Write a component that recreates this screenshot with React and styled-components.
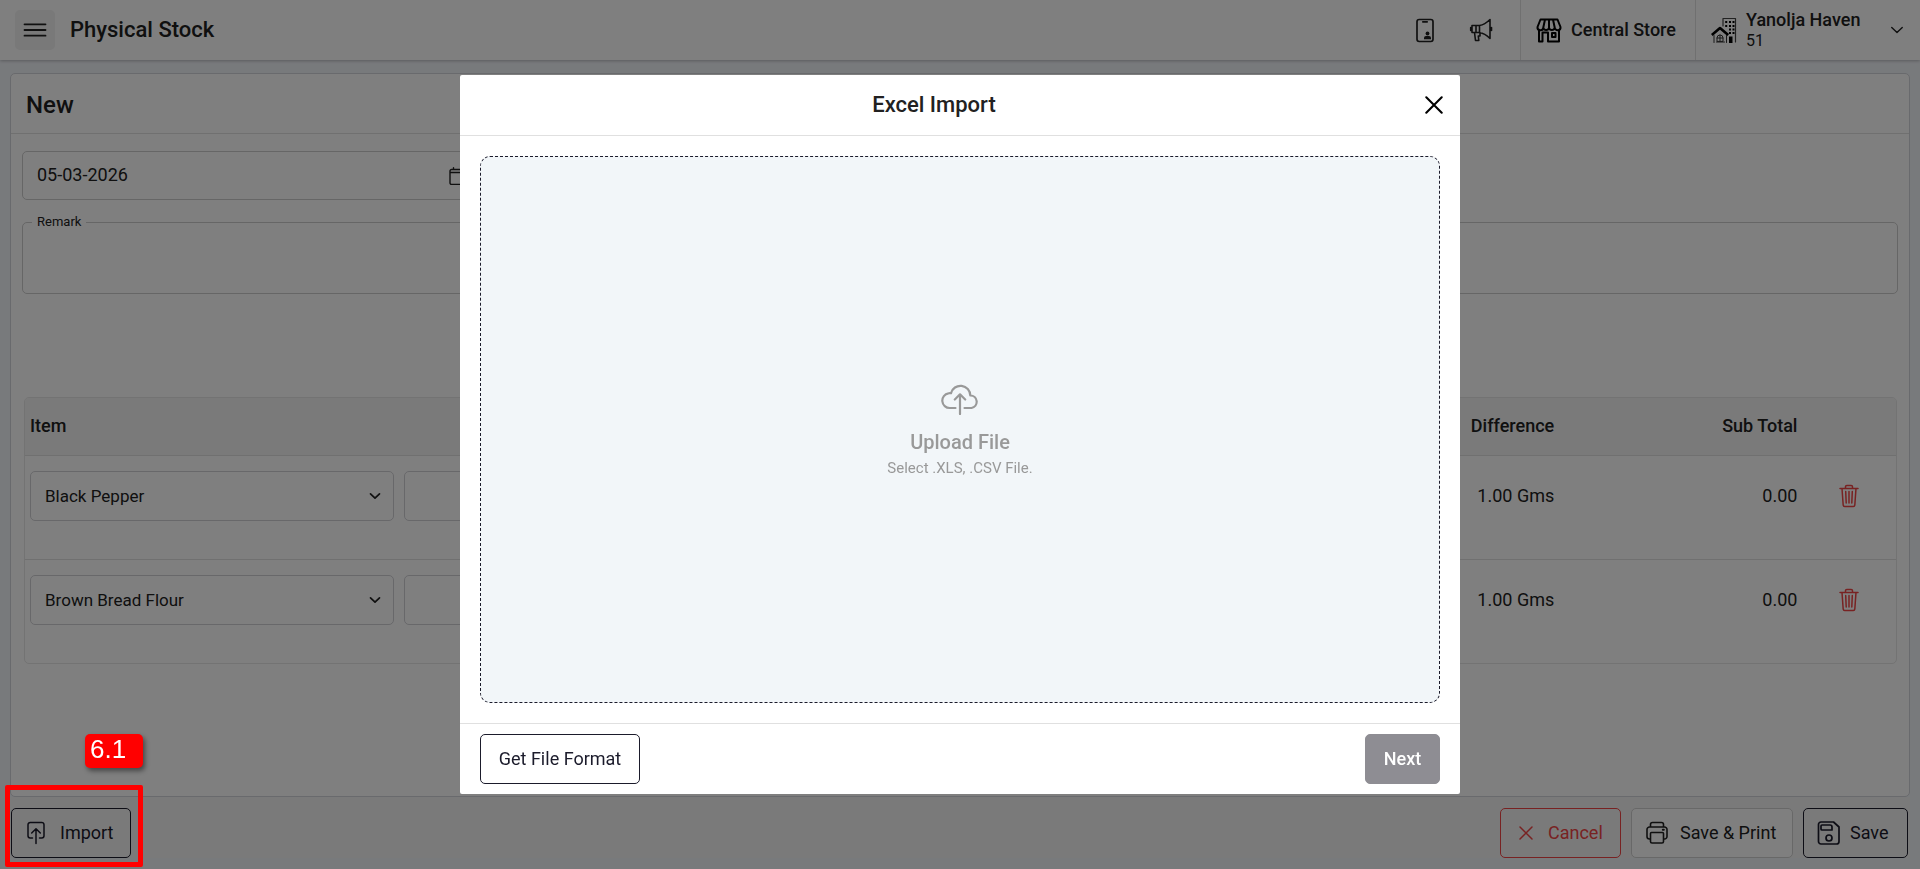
import React from "react";
import styled, { createGlobalStyle, css } from "styled-components";

const GlobalStyle = createGlobalStyle`
  *, *::before, *::after { box-sizing: border-box; }
  body { margin: 0; background: #f1f4f9; color: #212121; font: 400 18px/24px Roboto, sans-serif; }
  button, input, select, textarea { font: inherit; color: inherit; }
  h1, h2, p { margin: 0; }
`;

const Page = styled.div`
  display: flex;
  flex-direction: column;
  min-height: 100vh;
`;

const TopBar = styled.header`
  display: flex;
  align-items: center;
  height: 60px;
  padding-left: 15px;
  background: #fff;
  box-shadow: 0 1px 3px rgba(0, 0, 0, 0.25);
`;

const MenuButton = styled.button`
  display: grid;
  place-items: center;
  width: 40px;
  height: 40px;
  padding: 0;
  border: 0;
  border-radius: 5px;
  background: #f2f2f2;
`;

const PageTitle = styled.h1`
  flex: 1;
  margin-left: 15px;
  font-size: 22px;
  font-weight: 500;
`;

const BarIcon = styled.button`
  display: grid;
  place-items: center;
  width: 56px;
  height: 60px;
  padding: 0;
  border: 0;
  background: none;
`;

const BarIcons = styled.div`
  display: flex;
  padding-right: 11px;
`;

const BarSection = styled.button`
  display: flex;
  align-items: center;
  gap: 9px;
  width: ${(p) => p.$width};
  height: 60px;
  padding: 0 16px 0 15px;
  border: 0;
  border-left: 1px solid #e0e0e0;
  background: none;
  text-align: left;
  font-weight: 500;
`;

const Property = styled.span`
  display: flex;
  flex: 1;
  flex-direction: column;
  line-height: 22px;
`;

const PropertyCode = styled.span`
  font-size: 16px;
  font-weight: 400;
  line-height: 20px;
`;

const Card = styled.main`
  flex: 1;
  margin: 13px 10px 0;
  border: 1px solid #d2d4da;
  border-radius: 5px;
  background: #fff;
`;

const CardTitle = styled.h2`
  padding: 17px 15px 13px;
  border-bottom: 1px solid #e0e0e0;
  font-size: 24px;
  font-weight: 500;
  line-height: 29px;
`;

const Form = styled.form`
  padding: 17px 11px 0;
`;

const DateField = styled.label`
  display: flex;
  align-items: center;
  width: 460px;
  height: 49px;
  padding: 0 14px;
  border: 1px solid #ccc;
  border-radius: 5px;
`;

const DateInput = styled.input`
  flex: 1;
  min-width: 0;
  padding: 0 0 2px;
  border: 0;
  background: none;
`;

const Remark = styled.fieldset`
  height: 78px;
  margin: 16px 0 0;
  padding: 0 14px;
  border: 1px solid #ccc;
  border-radius: 5px;
`;

const RemarkLegend = styled.legend`
  margin-left: -5px;
  padding: 0 5px;
  font-size: 13px;
  line-height: 12px;
`;

const RemarkInput = styled.textarea`
  display: block;
  width: 100%;
  height: 52px;
  padding: 0;
  border: 0;
  background: none;
  resize: none;
`;

const TableFrame = styled.div`
  margin: 103px 1px 0 2px;
  overflow: hidden;
  border: 1px solid #e6e6e6;
  border-radius: 5px;
`;

const Table = styled.table`
  width: 100%;
  border-collapse: collapse;
  table-layout: fixed;
`;

const Th = styled.th`
  width: ${(p) => p.$width};
  height: 57px;
  padding: 0 5px;
  border-bottom: 1px solid #e0e0e0;
  background: #f4f4f4;
  font-weight: 500;
  text-align: ${(p) => p.$align || "left"};
`;

const Td = styled.td`
  height: 104px;
  padding: 15px 5px 0;
  text-align: ${(p) => p.$align || "left"};
  vertical-align: top;
  tr + tr > & { border-top: 1px solid #e0e0e0; }
`;

const CellLine = styled.div`
  display: flex;
  align-items: center;
  justify-content: ${(p) => p.$justify || "flex-end"};
  height: 50px;
`;

const SelectBox = styled.div`
  display: flex;
  align-items: center;
  height: 50px;
  padding-right: 12px;
  border: 1px solid #d0d0d5;
  border-radius: 5px;
`;

const Select = styled.select`
  flex: 1;
  height: 48px;
  padding: 0 0 0 14px;
  border: 0;
  background: none;
  font-size: 17px;
  appearance: none;
`;

const CellInput = styled.input`
  width: 100%;
  height: 50px;
  padding: 0 14px;
  border: 1px solid #d0d0d5;
  border-radius: 5px;
`;

const IconButton = styled.button`
  display: grid;
  place-items: center;
  padding: 0;
  border: 0;
  background: none;
  color: ${(p) => (p.$danger ? "#f04444" : "inherit")};
`;

const Actions = styled.footer`
  display: flex;
  align-items: center;
  gap: 10px;
  margin: 0 10px 11px;
  padding: 11px 2px 0 1px;
  background: #f5f5f5;
`;

const tones = {
  dark: css`border-color: #1b1b2b; color: #1b1b2b;`,
  danger: css`border-color: #f04444; color: #f04444;`,
  light: css`border-color: #d0d0d0; background: #fff;`,
  disabled: css`border-color: #8e8d93; background: #8e8d93; color: #fff; font-weight: 500;`,
};

const Button = styled.button`
  display: flex;
  align-items: center;
  justify-content: ${(p) => (p.$gap ? "flex-start" : "center")};
  gap: ${(p) => p.$gap};
  width: ${(p) => p.$width};
  height: 50px;
  padding: 0 0 0 ${(p) => p.$pad || "0"};
  border: 1px solid;
  border-radius: 5px;
  background: none;
  white-space: nowrap;
  ${(p) => tones[p.$tone]}
`;

const Marked = styled.div`
  position: relative;
  margin-right: auto;
`;

const MarkFrame = styled.div`
  position: absolute;
  inset: -23px -12px -9px -6px;
  z-index: 30;
  border: 5px solid #f00;
  border-radius: 2px;
  pointer-events: none;
`;

const MarkBadge = styled.span`
  position: absolute;
  right: -12px;
  bottom: 90px;
  z-index: 30;
  width: 58px;
  height: 34px;
  padding-left: 5px;
  border-radius: 5px;
  background: #f00;
  box-shadow: 2px 3px 5px rgba(0, 0, 0, 0.45);
  color: #fff;
  font: 26px/30px "Liberation Sans", sans-serif;
`;

const Overlay = styled.div`
  position: fixed;
  inset: 0;
  z-index: 20;
  display: flex;
  justify-content: center;
  padding: 75px 20px;
  background: rgba(0, 0, 0, 0.5);
`;

const Modal = styled.section`
  display: flex;
  flex-direction: column;
  width: 100%;
  max-width: 1000px;
  border-radius: 2px;
  background: #fff;
`;

const ModalHeader = styled.header`
  display: flex;
  align-items: center;
  height: 61px;
  border-bottom: 1px solid #e0e0e0;
`;

const ModalTitle = styled.h2`
  flex: 1;
  font-size: 22px;
  font-weight: 500;
  text-align: center;
`;

const CloseButton = styled(IconButton)`
  width: 52px;
  height: 52px;
  color: #000;
`;

const DropZone = styled.button`
  display: flex;
  flex: 1;
  flex-direction: column;
  align-items: center;
  justify-content: center;
  margin: 20px;
  padding: 4px 0 0;
  border: 1px dashed #1b1b2b;
  border-radius: 10px;
  background: #f2f6f9;
  color: #999;
`;

const DropTitle = styled.span`
  margin-top: 13px;
  font-size: 20px;
  font-weight: 500;
  line-height: 28px;
`;

const DropHint = styled.span`
  font-size: 15px;
`;

const ModalFooter = styled.footer`
  display: flex;
  justify-content: space-between;
  padding: 10px 20px;
  border-top: 1px solid #e0e0e0;
`;

const Svg = ({ w = 24, h = w, box = `0 0 ${w} ${h}`, sw = 1.5, children }) => (
  <svg width={w} height={h} viewBox={box} fill="none" stroke="currentColor" strokeWidth={sw} strokeLinecap="round" strokeLinejoin="round" aria-hidden="true">
    {children}
  </svg>
);

const MenuIcon = () => <Svg sw={1.8}><path d="M1.5 6.3h21M1.5 12h21M1.5 17.7h21" /></Svg>;

const PhoneIcon = () => (
  <Svg h={26} sw={1.7}>
    <rect x="4" y="2.5" width="16" height="22" rx="2.2" />
    <path d="M9.8 4.8h4.400" />
    <g fill="currentColor" stroke="none">
      <circle cx="14.5" cy="16.5" r="1.9" />
      <path d="M11 22.300v-1.300a2 2 0 0 1 2-2h3a2 2 0 0 1 2 2v1.300z" />
    </g>
  </Svg>
);

const MegaphoneIcon = () => (
  <Svg h={26} sw={1.6}>
    <path d="M3 8.500h7.500v7H3zM10.500 8.500C14 8 17.500 6 21 2.500v19c-3.500-3.500-7-5.500-10.500-6zM1.700 10.500v3M22.500 10.500v3M5.500 15.500l1 8h3.300l-.5-4.500H11v-3.500M7 8.500v7" />
  </Svg>
);

const StoreIcon = () => (
  <Svg w={26} h={26} sw={2}>
    <g color="#000" stroke="currentColor">
      <path d="M4.500 2.500h17l3 7.500a2.900 2.900 0 0 1-5.800.6 2.900 2.900 0 0 1-5.700 0 2.900 2.900 0 0 1-5.700 0A2.900 2.900 0 0 1 1.500 10zM9 2.500 7.300 10.500M17 2.500l1.700 8M13 2.500v8M3 13v11.500h3.500v-9h5.500v9h11V13M12 24.500h11M16 16h3.500v4H16z" />
    </g>
  </Svg>
);

const BuildingIcon = () => (
  <Svg w={26} h={26} sw={1.3}>
    <g color="#000">
      <path d="M12 9V1.500h12.500V25" strokeWidth="1.200" stroke="#444" />
      <g stroke="currentColor" strokeLinecap="butt">
        <path d="M14.200 5h2M18 5h2M21.500 5h2M14.200 9h2M18 9h2M21.500 9h2M18 12.500h2M21.500 12.500h2M18 16h2M21.500 16h2" strokeWidth="2.200" />
        <path d="M.8 18 9 11l8.200 7" strokeWidth="2.600" />
      </g>
      <path d="M3 18.500V25.500M15.500 18.500v7M5.500 25h8M6 24v-3a3 3 0 0 1 6 0v3zM9 18v6M6 21h6" strokeWidth="1" stroke="#333" />
      <path d="M18 19.500h3.500V26H18z" fill="currentColor" stroke="none" />
    </g>
  </Svg>
);

const ChevronIcon = ({ w = 12, sw = 1.7 }) => <Svg w={w} box="0 0 12 12" sw={sw}><path d="m1.500 3.800 4.500 4.400 4.500-4.400" /></Svg>;

const CalendarIcon = () => <Svg w={18} sw={1.4}><path d="M2.500 2.500h13a1.500 1.500 0 0 1 1.500 1.500v12a1.500 1.500 0 0 1-1.500 1.500h-13A1.500 1.500 0 0 1 1 16V4a1.500 1.500 0 0 1 1.500-1.500zM1 5.500h16M4.500.8v1.700M13.500.8v1.700" /></Svg>;

const TrashIcon = () => <Svg w={20} h={24} sw={1.5}><path d="M1 4.500h18M3 4.500l1.200 16.700a1.500 1.500 0 0 0 1.500 1.300h8.600a1.500 1.500 0 0 0 1.500-1.300L17 4.500M6.500 4.500V2.800A1.300 1.300 0 0 1 7.800 1.500h4.400a1.300 1.300 0 0 1 1.300 1.300v1.700M6.700 7.500l.5 11.500M10 7.500V19M13.300 7.500 12.800 19" /></Svg>;

const ImportIcon = () => <Svg w={18} h={24}><path d="M5.500 17H3.200A2.200 2.200 0 0 1 1 14.800V3.700a2.200 2.200 0 0 1 2.200-2.200h11.600A2.200 2.200 0 0 1 17 3.700v11.100a2.200 2.200 0 0 1-2.200 2.200h-2.300M9 22.500V8M4.700 12 9 7.700l4.300 4.300" /></Svg>;

const CrossIcon = ({ w = 14, sw = 1.5 }) => <Svg w={w} box="0 0 14 14" sw={sw}><path d="m1 1 12 12M13 1 1 13" /></Svg>;

const PrinterIcon = () => (
  <Svg w={22} h={24} sw={1.6}>
    <path d="M4.500 6V3.500A2 2 0 0 1 6.500 1.500h9a2 2 0 0 1 2 2V6M4.500 18H3.500A2.500 2.500 0 0 1 1 15.500V8.500A2.500 2.500 0 0 1 3.500 6h15A2.500 2.500 0 0 1 21 8.500v7A2.500 2.500 0 0 1 18.500 18h-1M5.500 11.500h11a1 1 0 0 1 1 1v8a1.500 1.500 0 0 1-1.500 1.500H6A1.500 1.500 0 0 1 4.500 20.500v-8a1 1 0 0 1 1-1z" />
    <path d="M16.800 8.700h1" strokeWidth="2" />
  </Svg>
);

const SaveIcon = () => <Svg w={23} h={24} sw={1.7}><path d="M4 1h12.500L22 6V20.500a2.500 2.500 0 0 1-2.500 2.500H4A2.500 2.500 0 0 1 1.500 20.500V3.500A2.500 2.500 0 0 1 4 1zM5 4h8a2 2 0 0 1 2 2v3H5A1 1 0 0 1 4 8V5a1 1 0 0 1 1-1z" /><circle cx="12" cy="17" r="3" /></Svg>;

const UploadIcon = () => (
  <Svg w={38} h={32} sw={2.2}>
    <path d="M14.500 25H8.800a7.400 7.400 0 0 1-1.300-14.700 7 7 0 0 1 2.500-.1 9.800 9.800 0 0 1 19.300 2.300A6.300 6.300 0 0 1 30.500 25H23.500M19 31V11.500M13.800 16.500l5.200-5.200 5.200 5.200" />
  </Svg>
);

const rows = [
  { item: "Black Pepper", difference: "1.00 Gms", subTotal: "0.00" },
  { item: "Brown Bread Flour", difference: "1.00 Gms", subTotal: "0.00" },
];

const ItemRow = ({ item, difference, subTotal }) => (
  <tr>
    <Td>
      <SelectBox>
        <Select aria-label="Item" defaultValue={item}><option>{item}</option></Select>
        <ChevronIcon />
      </SelectBox>
    </Td>
    <Td><CellInput aria-label={`Quantity of ${item}`} /></Td>
    <Td $align="right"><CellLine>{difference}</CellLine></Td>
    <Td $align="right"><CellLine>{subTotal}</CellLine></Td>
    <Td>
      <CellLine $justify="center">
        <IconButton type="button" $danger aria-label={`Delete ${item}`}><TrashIcon /></IconButton>
      </CellLine>
    </Td>
  </tr>
);

export default function App() {
  return (
    <>
      <GlobalStyle />
      <Page>
        <TopBar>
          <MenuButton aria-label="Menu"><MenuIcon /></MenuButton>
          <PageTitle>Physical Stock</PageTitle>
          <BarIcons>
            <BarIcon aria-label="Mobile app"><PhoneIcon /></BarIcon>
            <BarIcon aria-label="Announcements"><MegaphoneIcon /></BarIcon>
          </BarIcons>
          <BarSection $width="175px"><StoreIcon />Central Store</BarSection>
          <BarSection $width="225px">
            <BuildingIcon />
            <Property>Yanolja Haven<PropertyCode>51</PropertyCode></Property>
            <ChevronIcon w={14} sw={1.2} />
          </BarSection>
        </TopBar>

        <Card>
          <CardTitle>New</CardTitle>
          <Form>
            <DateField>
              <DateInput aria-label="Date" defaultValue="05-03-2026" />
              <CalendarIcon />
            </DateField>
            <Remark>
              <RemarkLegend>Remark</RemarkLegend>
              <RemarkInput aria-label="Remark" />
            </Remark>
            <TableFrame>
              <Table>
                <thead>
                  <tr>
                    <Th $width="20%">Item</Th>
                    <Th />
                    <Th $width="12%" $align="right">Difference</Th>
                    <Th $width="13%" $align="right">Sub Total</Th>
                    <Th $width="5%" />
                  </tr>
                </thead>
                <tbody>{rows.map((r) => <ItemRow key={r.item} {...r} />)}</tbody>
              </Table>
            </TableFrame>
          </Form>
        </Card>

        <Actions>
          <Marked>
            <Button $tone="dark" $gap="15px" $pad="15px" $width="120px"><ImportIcon />Import</Button>
            <MarkFrame />
            <MarkBadge>6.1</MarkBadge>
          </Marked>
          <Button $tone="danger" $gap="15px" $pad="18px" $width="121px"><CrossIcon />Cancel</Button>
          <Button $tone="light" $gap="12px" $pad="14px" $width="162px"><PrinterIcon />Save &amp; Print</Button>
          <Button $tone="dark" $gap="10px" $pad="13px" $width="105px"><SaveIcon />Save</Button>
        </Actions>
      </Page>

      <Overlay>
        <Modal role="dialog" aria-modal="true" aria-labelledby="import-title">
          <ModalHeader>
            <ModalTitle id="import-title">Excel Import</ModalTitle>
            <CloseButton aria-label="Close"><CrossIcon w={18} sw={1.6} /></CloseButton>
          </ModalHeader>
          <DropZone>
            <UploadIcon />
            <DropTitle>Upload File</DropTitle>
            <DropHint>Select .XLS, .CSV File.</DropHint>
          </DropZone>
          <ModalFooter>
            <Button $tone="dark" $width="160px">Get File Format</Button>
            <Button $tone="disabled" $width="75px" disabled>Next</Button>
          </ModalFooter>
        </Modal>
      </Overlay>
    </>
  );
}
